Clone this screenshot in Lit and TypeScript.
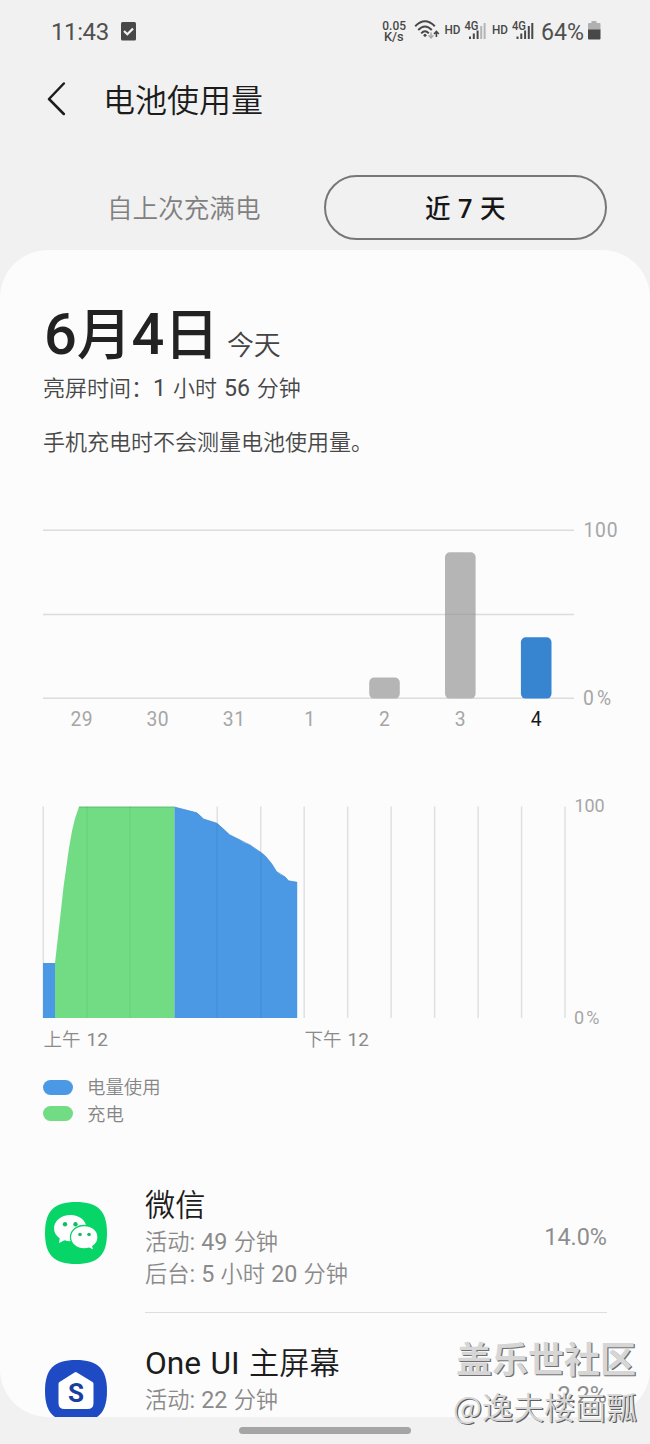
import { LitElement, html, svg, css } from "lit";
import { customElement, property } from "lit/decorators.js";
import { classMap } from "lit/directives/class-map.js";

interface Day { label: string; x: number; top?: number; today?: boolean }

/** Latin letters and digits are set slightly larger than the Han text around them. */
const mixed = (text: string) =>
  text.split(/([\x21-\x7e]+)/).map((part, i) => (i % 2 ? html`<span class="latin">${part}</span>` : part));

const latinStyles = css`
  .latin { font-size: 1.05em; font-weight: 400; line-height: 1; }
`;

@customElement("status-bar")
class StatusBar extends LitElement {
  static styles = css`
    :host { display: flex; height: 62px; align-items: center; justify-content: space-between; padding: 0 48px 0 51px; color: #505050; }
    .left { display: flex; align-items: center; gap: 12px; }
    .clock { font-size: 24px; line-height: 28px; font-weight: 400; letter-spacing: -0.4px; padding-top: 1px; width: 58px; }
    svg { display: block; }
  `;
  render() {
    return html`
      <div class="left">
        <span class="clock">11:43</span>
        <svg width="15" height="19" viewBox="0 0 15 19"><rect width="15" height="18.5" rx="1.5" fill="#484848" /><path d="M3 9l3.3 3.2L12 6.6" fill="none" stroke="#f2f2f2" stroke-width="2.2" /></svg>
      </div>
      <svg width="222" height="40" viewBox="380 11 222 40" fill="#484848">
        <g font-family="Roboto, sans-serif" font-weight="500">
          <text x="382.3" y="29.5" font-size="12.8" textLength="23.7" lengthAdjust="spacingAndGlyphs">0.05</text>
          <text x="384" y="40.5" font-size="12.8" textLength="19.7" lengthAdjust="spacingAndGlyphs">K/s</text>
          <text x="444.5" y="34" font-size="12" textLength="16" lengthAdjust="spacingAndGlyphs">HD</text>
          <text x="464.5" y="30" font-size="12.5" textLength="14" lengthAdjust="spacingAndGlyphs">4G</text>
          <text x="492" y="34" font-size="12" textLength="16" lengthAdjust="spacingAndGlyphs">HD</text>
          <text x="512" y="30" font-size="12.5" textLength="14" lengthAdjust="spacingAndGlyphs">4G</text>
        </g>
        <g fill="none" stroke="#484848" stroke-width="2">
          <path d="M415.2 26.2Q425 16.4 434.8 26.2" />
          <path d="M418.2 30Q425 22.8 431.8 30" />
          <path d="M421.2 33.4Q425 29.2 428.8 33.4" />
        </g>
        <circle cx="425" cy="35.3" r="1.5" />
        <path d="M431 32.5v5M428.6 35.3l2.4 2.5 2.4-2.5" fill="none" stroke="#a8a8a8" stroke-width="1.5" />
        <path d="M436.4 37V31.8M434 34l2.4-2.5 2.4 2.5" fill="none" stroke="#484848" stroke-width="1.6" />
        <path d="M469 36.5h2V39h-2zM472.8 33.5h2V39h-2zM476.6 30.5h2V39h-2z" />
        <path d="M480.2 26h2v13h-2zM483.6 23h2v16h-2z" fill="#b5b5b5" />
        <path d="M516.5 36.5h2V39h-2zM520.3 33.5h2V39h-2zM524.1 30.5h2V39h-2zM527.8 26h2v13h-2zM531.3 23h2v16h-2z" />
        <text x="541" y="39.5" font-family="Roboto, sans-serif" font-weight="400" font-size="24" textLength="43" lengthAdjust="spacingAndGlyphs" fill="#505050">64%</text>
        <path d="M591.5 21h5v2h3q1 0 1 1v6h-12.5v-6q0-1 1-1h2.5z" fill="#b0b0b0" />
        <path d="M588 29.5h12.5v9q0 1-1 1H589q-1 0-1-1z" />
      </svg>`;
  }
}

@customElement("daily-chart")
class DailyChart extends LitElement {
  static styles = css`
    :host { display: block; height: 230px; }
    svg { display: block; }
    text { font-family: Roboto, "Noto Sans", sans-serif; font-size: 19.3px; font-weight: 400; fill: #a6a6a6; }
    .day { text-anchor: middle; letter-spacing: 0.5px; }
    .today { fill: #181818; }
    .grid { stroke: #dcdcdc; stroke-width: 1.5; }
    .bar { fill: #b5b5b5; }
    .bar.current { fill: #3785d1; }
  `;
  private days: Day[] = [
    { label: "29", x: 81.8 },
    { label: "30", x: 157.8 },
    { label: "31", x: 234.2 },
    { label: "1", x: 309.8 },
    { label: "2", x: 384.7, top: 677.5 },
    { label: "3", x: 460.5, top: 552.3 },
    { label: "4", x: 536.4, top: 637.2, today: true },
  ];
  render() {
    return html`<svg width="650" height="230" viewBox="0 510 650 230">
      ${[530.3, 614.4, 698.3].map((y) => svg`<path class="grid" d="M43 ${y}H574" />`)}
      ${this.days.map((d) => svg`
        ${d.top ? svg`<rect class=${classMap({ bar: true, current: !!d.today })} x=${d.x - 15.5} y=${d.top} width="30.6" height=${698.6 - d.top} rx="5" />` : ""}
        <text class=${classMap({ day: true, today: !!d.today })} x=${d.x} y="726">${d.label}</text>`)}
      <path d="M445 614.4h30.6" stroke="#a8a8a8" stroke-width="1.2" />
      <text x="583.5" y="536.5" textLength="34">100</text>
      <text x="583" y="704.5" textLength="28">0%</text>
    </svg>`;
  }
}

@customElement("level-chart")
class LevelChart extends LitElement {
  static styles = css`
    :host { display: block; height: 275px; }
    svg { display: block; }
    text { font-family: Roboto, "Noto Sans CJK SC", sans-serif; font-size: 18px; font-weight: 400; fill: #a6a6a6; }
    .hour { fill: #8a8a8a; font-size: 18.5px; font-weight: 350; }
    .digits { font-size: 19px; font-weight: 400; }
    .grid { fill: none; stroke: #e0e0e0; stroke-width: 1.5; }
    .over { fill: none; stroke: #000; stroke-opacity: 0.05; stroke-width: 1.5; }
  `;
  render() {
    const lines = Array.from({ length: 13 }, (_, i) => 43.3 + i * 43.48);
    return html`<svg width="650" height="275" viewBox="0 780 650 275">
      ${lines.map((x) => svg`<path class="grid" d="M${x} 806.5V1018" />`)}
      <path fill="#4b98e5" d="M43 963H55V1018H43zM174.3 807L185 809.7 196.8 812.8 199 814.5 203.5 819 217 823.3 222.5 828 229.5 834.7 239 839.5 244.5 842.8 250 845 254 848 261 852.5 265.3 856 271.5 863.5 276.5 871.5 280.5 874.5 285 876.8 288.5 880.8 297.2 882.3V1018H174.3z" />
      <path fill="#72dc84" d="M55 1018V963L60 919 63.5 887 69 848 72 831 75 818.5 79 806.7H174.3V1018z" />
      <path fill="none" stroke="#3e87cf" stroke-opacity=".7" d="M174.3 807L196.8 812.8 203.5 819 217 823.3 229.5 834.7 250 845 261 852.5 265.3 856 271.5 863.5 276.5 871.5 285 876.8 288.5 880.8 297.2 882.3" />
      <path fill="none" stroke="#62c274" d="M79 807.2H174" />
      <path class="over" d="M87 807V1018M130 807V1018M217 824V1018M261 853V1018" />
      <text x="574.5" y="812" textLength="30">100</text>
      <text x="574" y="1023.5" textLength="25.5">0%</text>
      <text class="hour" x="43.5" y="1046">上午<tspan class="digits" x="86.5">12</tspan></text>
      <text class="hour" x="304.5" y="1046">下午<tspan class="digits" x="347.5">12</tspan></text>
    </svg>`;
  }
}

@customElement("app-usage")
class AppUsage extends LitElement {
  static styles = [latinStyles, css`
    :host { display: flex; height: 158px; }
    .icon { flex: none; width: 62px; padding: 47px 38px 0 45px; }
    .icon ::slotted(svg) { display: block; }
    .body { flex: 1; display: flex; justify-content: space-between; margin-right: 43px; border-bottom: 1.5px solid #dedede; }
    .name { margin-top: 31px; height: 40px; font-size: 30.2px; line-height: 40px; color: #1c1c1c; word-spacing: 2px; }
    .detail { height: 32px; font-size: 22.2px; line-height: 32px; color: #8a8a8a; white-space: pre; word-spacing: 0.8px; }
    .share { margin-top: 66px; font-size: 23.4px; font-weight: 400; line-height: 32px; color: #8e8e8e; }
  `];
  @property() name = "";
  @property() share = "";
  @property({ attribute: false }) details: string[] = [];
  render() {
    return html`
      <div class="icon"><slot></slot></div>
      <div class="body">
        <div>
          <div class="name">${mixed(this.name)}</div>
          ${this.details.map((d) => html`<div class="detail">${mixed(d)}</div>`)}
        </div>
        <div class="share">${this.share}</div>
      </div>`;
  }
}

@customElement("app-root")
class AppRoot extends LitElement {
  static styles = [latinStyles, css`
    :host { display: block; position: relative; width: 650px; height: 1444px; overflow: hidden; background: #f1f1f1; font-family: Roboto, "Noto Sans CJK SC", sans-serif; font-weight: 350; color: #1c1c1c; }
    svg { display: block; }
    .header { height: 76px; display: flex; align-items: center; padding-left: 46px; gap: 37px; font-size: 32px; line-height: 46px; }
    .title { padding-top: 2px; }
    .tabs { display: flex; height: 65px; margin: 37px 43px 10px 44px; font-size: 25.6px; }
    .tab { box-sizing: border-box; flex: 1; display: flex; align-items: center; justify-content: center; color: #808080; padding-bottom: 2px; }
    .tab.active { border: 2px solid #777; border-radius: 33px; color: #161616; font-weight: 500; word-spacing: 1px; }
    .card { height: 1167px; overflow: hidden; background: #fcfcfc; border-radius: 48px; }
    .date { display: flex; align-items: baseline; height: 68px; padding: 48px 0 0 44px; gap: 8px; line-height: 74px; }
    .day { font-size: 55px; font-weight: 500; color: #222; letter-spacing: -0.2px; }
    .day .latin { font-weight: 500; }
    .rel { font-size: 27px; color: #444; position: relative; top: 1px; }
    .note { padding-left: 43px; font-size: 22px; line-height: 32px; color: #484848; height: 54px; margin-top: 7px; word-spacing: 1.6px; }
    .note + .note { margin-top: 0; height: 83px; }
    .level { margin-top: 40px; }
    .legend { display: grid; grid-template-columns: 30px auto; justify-content: start; align-items: center; grid-auto-rows: 26.5px; column-gap: 14px; margin: 19px 0 0 43px; height: 81px; font-size: 18.4px; line-height: 26px; color: #868686; }
    .label { padding-top: 2px; }
    .swatch { height: 15px; border-radius: 8px; background: #4b98e5; }
    .swatch.charging { background: #72dc84; }
    .home { width: 172px; height: 7px; border-radius: 4px; background: #a5a5a5; margin: 10px auto 0 239px; }
    .watermark { position: absolute; left: 453px; top: 1332px; width: 190px; color: #d6d6d6; white-space: nowrap; text-shadow: 1.3px 1.3px 0 #707070; font-family: "Noto Sans CJK SC", sans-serif; }
    .site { font-size: 36px; line-height: 50px; font-weight: 700; padding-left: 3px; }
    .author { font-size: 31px; line-height: 48px; font-weight: 350; text-shadow: 1.2px 1.2px 0 #606060; }
  `];
  render() {
    return html`
      <status-bar></status-bar>
      <div class="header">
        <svg width="20" height="36" viewBox="0 0 20 36"><path d="M17.8 1.5L3 17l14.8 15" fill="none" stroke="#1c1c1c" stroke-width="2.5" stroke-linecap="round" stroke-linejoin="round" /></svg>
        <span class="title">电池使用量</span>
      </div>
      <div class="tabs"><div class="tab">自上次充满电</div><div class="tab active">近 7 天</div></div>
      <div class="card">
        <div class="date"><span class="day">${mixed("6月4日")}</span><span class="rel">今天</span></div>
        <div class="note">${mixed("亮屏时间：1 小时 56 分钟")}</div>
        <div class="note">手机充电时不会测量电池使用量。</div>
        <daily-chart></daily-chart>
        <level-chart class="level"></level-chart>
        <div class="legend">
          <span class="swatch"></span><span class="label">电量使用</span>
          <span class="swatch charging"></span><span class="label">充电</span>
        </div>
        <app-usage name="微信" share="14.0%" .details=${["活动: 49 分钟", "后台: 5 小时 20 分钟"]}>
          <svg width="62" height="62" viewBox="0 0 62 62">
            <path d="M31 0C53 0 62 9 62 31S53 62 31 62 0 53 0 31 9 0 31 0z" fill="#08d568" />
            <path d="M25.5 13C16 13 9 19 9 26.3c0 4.2 2.2 7.7 5.8 10.1L14 41l5.5-2.7q3 .9 6 .9C35 39.2 41.5 33.5 41.5 26.2S34.5 13 25.5 13z" fill="#fff" />
            <path d="M39.3 23.5c-7.7 0-13.8 5-13.8 11.7s6.1 11.7 13.8 11.7q2.6 0 4.7-.7l5.3 2.5-1.5-4.3c3.3-2.2 5.2-5.5 5.2-9.2 0-6.7-6-11.7-13.7-11.7z" fill="#fff" stroke="#08d568" stroke-width="1.3" />
            <g fill="#16bc64"><circle cx="20" cy="22.3" r="2.2" /><circle cx="30.5" cy="22.3" r="2.2" /><circle cx="35" cy="32.5" r="1.8" /><circle cx="44" cy="32.5" r="1.8" /></g>
          </svg>
        </app-usage>
        <app-usage name="One UI 主屏幕" share="2.2%" .details=${["活动: 22 分钟"]}>
          <svg width="62" height="62" viewBox="0 0 62 62">
            <path d="M31 0C53 0 62 9 62 31S53 62 31 62 0 53 0 31 9 0 31 0z" fill="#1e4bc4" />
            <path d="M29.5 12.5q1.2-.8 2.4 0L47.5 22q1 .7 1 1.800V43q0 6-6 6h-23q-6 0-6-6V23.800q0-1.100 1-1.800z" fill="#fff" />
            <text x="31" y="42" text-anchor="middle" font-size="26" font-weight="700" font-family="Roboto, sans-serif" fill="#173f9e">S</text>
          </svg>
        </app-usage>
      </div>
      <div class="home"></div>
      <div class="watermark"><div class="site">盖乐世社区</div><div class="author">@逸夫楼画瓢</div></div>
    `;
  }
}
